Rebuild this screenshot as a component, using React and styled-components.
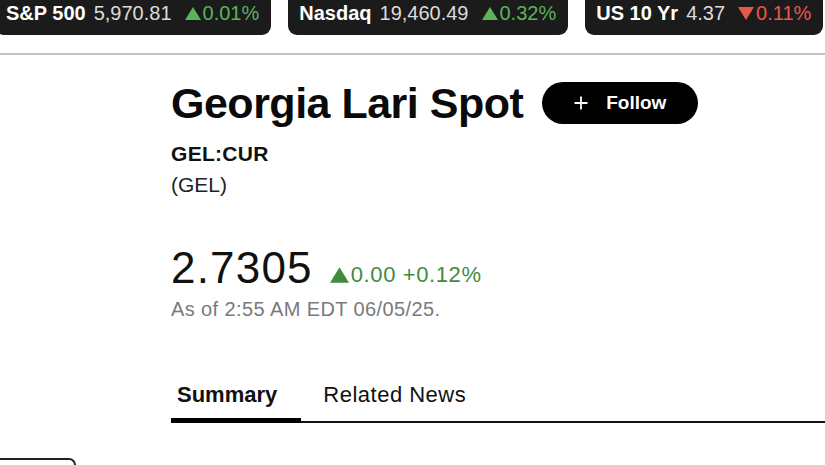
import React from "react";
import styled, { createGlobalStyle } from "styled-components";

const tickers = [
  { name: "S&P 500", value: "5,970.81", change: "0.01%", up: true },
  { name: "Nasdaq", value: "19,460.49", change: "0.32%", up: true },
  { name: "US 10 Yr", value: "4.37", change: "0.11%", up: false },
];

const Triangle = ({ up, w, h, color }) => (
  <svg width={w} height={h} viewBox="0 0 16 13">
    {up ? (
      <path d="M8 0L16 13H0Z" fill={color} />
    ) : (
      <path d="M0 0H16L8 13Z" fill={color} />
    )}
  </svg>
);

const App = () => {
  return (
    <>
      <GlobalStyle />
      <StPage>
        <StTickerBar>
          {tickers.map((t, i) => (
            <StPill key={t.name} first={i === 0}>
              <StTickName>{t.name}</StTickName>
              <StTickValue>{t.value}</StTickValue>
              <StTickChange up={t.up}>
                <Triangle
                  up={t.up}
                  w={16}
                  h={13}
                  color={t.up ? "#5cb35c" : "#e8584a"}
                />
                {t.change}
              </StTickChange>
            </StPill>
          ))}
        </StTickerBar>

        <StMain>
          <StTitleRow>
            <StTitle>Georgia Lari Spot</StTitle>
            <StFollow>
              <svg width="14" height="14" viewBox="0 0 14 14">
                <path d="M7 0.5V13.5M0.5 7H13.5" stroke="#fff" strokeWidth="1.8" />
              </svg>
              Follow
            </StFollow>
          </StTitleRow>
          <StTicker>GEL:CUR</StTicker>
          <StCode>(GEL)</StCode>

          <StPriceRow>
            <StPrice>2.7305</StPrice>
            <StChange>
              <Triangle up w={19} h={16} color="#3f8c3f" />
              0.00 +0.12%
            </StChange>
          </StPriceRow>
          <StAsOf>As of 2:55 AM EDT 06/05/25.</StAsOf>

          <StTabs>
            <StTab active pl="6px" pr="24px">
              Summary
            </StTab>
            <StTab pl="22px" pr="22px">
              Related News
            </StTab>
          </StTabs>
        </StMain>

        <StBottomBox />
      </StPage>
    </>
  );
};

const GlobalStyle = createGlobalStyle`
  html, body {
    margin: 0;
    padding: 0;
    background: #fff;
    overflow: hidden;
  }
  body {
    font-family: "Liberation Sans", Arial, sans-serif;
    color: #111;
  }
`;

const StPage = styled.div`
  width: 825px;
  height: 465px;
  overflow: hidden;
`;

const StTickerBar = styled.div`
  display: flex;
  gap: 17px;
  height: 53px;
  border-bottom: 2px solid #c4c4c4;
`;

const StPill = styled.div`
  display: flex;
  align-items: center;
  gap: 8px;
  height: 43px;
  margin-top: -8px;
  margin-left: ${(p) => (p.first ? "-5px" : "0")};
  padding: 0 12px 0 11px;
  background: #1b1b1b;
  border-radius: 9px;
  white-space: nowrap;
`;

const StTickName = styled.span`
  font-size: 20px;
  font-weight: 700;
  color: #fff;
`;

const StTickValue = styled.span`
  font-size: 20px;
  color: #dcdcdc;
`;

const StTickChange = styled.span`
  display: flex;
  align-items: center;
  gap: 2px;
  margin-left: 5px;
  font-size: 20px;
  color: ${(p) => (p.up ? "#5cb35c" : "#e8584a")};
`;

const StMain = styled.div`
  padding: 27px 0 0 171px;
`;

const StTitleRow = styled.div`
  display: flex;
  align-items: center;
  gap: 19px;
  height: 42px;
`;

const StTitle = styled.h1`
  margin: 0;
  font-size: 43px;
  line-height: 42px;
  font-weight: 700;
  letter-spacing: -0.5px;
  color: #0a0a0a;
`;

const StFollow = styled.button`
  display: flex;
  align-items: center;
  justify-content: center;
  gap: 18px;
  width: 156px;
  height: 42px;
  padding: 0;
  border: none;
  border-radius: 21px;
  background: #000;
  color: #fff;
  font-family: "Liberation Sans", Arial, sans-serif;
  font-size: 19px;
  font-weight: 600;
`;

const StTicker = styled.div`
  margin-top: 18px;
  font-size: 21px;
  line-height: 24px;
  font-weight: 700;
  letter-spacing: 0.3px;
`;

const StCode = styled.div`
  margin-top: 7px;
  font-size: 21px;
  line-height: 24px;
  color: #222;
`;

const StPriceRow = styled.div`
  display: flex;
  align-items: baseline;
  gap: 17px;
  margin-top: 49px;
`;

const StPrice = styled.div`
  font-size: 44px;
  line-height: 44px;
  letter-spacing: 1.2px;
  color: #111;
`;

const StChange = styled.div`
  display: flex;
  align-items: center;
  gap: 2px;
  font-size: 22px;
  color: #3f8c3f;
  letter-spacing: 0.6px;
`;

const StAsOf = styled.div`
  margin-top: 7px;
  font-size: 20px;
  line-height: 24px;
  letter-spacing: 0.4px;
  color: #7a7a7a;
`;

const StTabs = styled.div`
  display: flex;
  margin-top: 61px;
  border-bottom: 2px solid #111;
`;

const StTab = styled.div`
  padding: 0 ${(p) => p.pr} 10px ${(p) => p.pl};
  margin-bottom: ${(p) => (p.active ? "-2px" : "0")};
  border-bottom: ${(p) => (p.active ? "5px solid #000" : "none")};
  font-size: 22px;
  line-height: 26px;
  font-weight: ${(p) => (p.active ? 700 : 400)};
  letter-spacing: ${(p) => (p.active ? "0" : "0.5px")};
  color: #111;
`;

const StBottomBox = styled.div`
  width: 92px;
  height: 40px;
  margin: 35px 0 0 -20px;
  border: 2px solid #222;
  border-radius: 7px;
`;

export default App;
